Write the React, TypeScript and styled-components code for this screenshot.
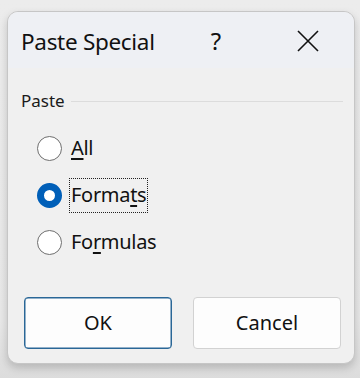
import React, { useState } from "react"
import styled, { createGlobalStyle } from "styled-components"

const GlobalStyle = createGlobalStyle`
  html, body {
    margin: 0;
    padding: 0;
    background: #ebebeb;
    font-family: "Noto Sans", "Open Sans", sans-serif;
    color: #1a1a1a;
  }
`

const Stage = styled.div`
  width: 360px;
  height: 378px;
  padding: 11px 5px 0 7px;
  box-sizing: border-box;
  background: linear-gradient(#ececec 0%, #e8e8e8 85%, #dcdcdc 100%);
`

const Dialog = styled.div`
  width: 348px;
  height: 353px;
  box-sizing: border-box;
  border: 1px solid #c6c6c6;
  border-radius: 11px;
  background: #f0f0f0;
  box-shadow: 0 4px 8px rgba(0, 0, 0, 0.18);
  overflow: hidden;
  display: flex;
  flex-direction: column;
`

const TitleBar = styled.div`
  height: 56px;
  background: #eef0f4;
  display: flex;
  align-items: center;
  padding: 0 24px 0 13px;
`

const Title = styled.div`
  font-size: 22.5px;
  letter-spacing: -0.3px;
  color: #111;
  width: 188px;
  flex-shrink: 0;
  padding-top: 2px;
`

const TitleButton = styled.div<{ $w: number; $push?: boolean }>`
  width: ${(p) => p.$w}px;
  flex-shrink: 0;
  margin-left: ${(p) => (p.$push ? "auto" : "0")};
  display: flex;
  justify-content: center;
  align-items: center;
  font-size: 24px;
  color: #111;
  padding-top: 1px;
`

const Body = styled.div`
  flex: 1;
  display: flex;
  flex-direction: column;
  padding: 20px 11px 0 13px;
`

const GroupHeader = styled.div`
  display: flex;
  align-items: center;
  gap: 6px;
  font-size: 17px;
  color: #1a1a1a;
  height: 24px;
`

const GroupLine = styled.div`
  flex: 1;
  height: 1px;
  background: #dcdcdc;
  margin-top: 2px;
`

const RadioList = styled.div`
  display: flex;
  flex-direction: column;
  gap: 20px;
  padding: 23px 0 0 16px;
`

const RadioRow = styled.label`
  display: flex;
  align-items: center;
  gap: 8px;
  height: 27px;
  font-size: 20px;
  color: #111;
  cursor: default;
`

const RadioCircle = styled.span<{ $checked: boolean }>`
  width: 25px;
  height: 25px;
  box-sizing: border-box;
  border-radius: 50%;
  flex-shrink: 0;
  border: ${(p) => (p.$checked ? "7.5px solid #005fb8" : "1.5px solid #6e6e6e")};
  background: #fff;
`

const RadioText = styled.span<{ $focus: boolean }>`
  padding: 2px 1px 4px 1px;
  outline: ${(p) => (p.$focus ? "1px dotted #222" : "none")};
  outline-offset: 0;
  letter-spacing: -0.3px;
`

const Accel = styled.span`
  text-decoration: underline;
  text-underline-offset: 3px;
  text-decoration-thickness: 1.5px;
`

const ButtonRow = styled.div`
  margin-top: auto;
  display: flex;
  gap: 21px;
  padding: 0 0 14px 3px;
`

const DialogButton = styled.button<{ $primary?: boolean }>`
  width: 148px;
  height: 52px;
  box-sizing: border-box;
  border-radius: 4px;
  background: #fdfdfd;
  border: 1px solid ${(p) => (p.$primary ? "#2a6797" : "#d2d2d2")};
  box-shadow: ${(p) => (p.$primary ? "inset 0 0 0 0.5px #2a6797" : "none")};
  font-family: "Noto Sans", "Open Sans", sans-serif;
  font-size: 20px;
  color: #111;
  padding: 0 0 2px;
`

const options = [
  { key: "all", pre: "", acc: "A", post: "ll" },
  { key: "formats", pre: "Forma", acc: "t", post: "s" },
  { key: "formulas", pre: "Fo", acc: "r", post: "mulas" },
]

export default function App() {
  const [selected, setSelected] = useState("formats")

  return (
    <>
      <GlobalStyle />
      <Stage>
        <Dialog>
          <TitleBar>
            <Title>Paste Special</Title>
            <TitleButton $w={14}>?</TitleButton>
            <TitleButton $w={44} $push>
              <svg width="22" height="22" viewBox="0 0 22 22" aria-hidden="true">
                <path d="M1 1L21 21M21 1L1 21" stroke="#111" strokeWidth="1.6" fill="none" />
              </svg>
            </TitleButton>
          </TitleBar>
          <Body>
            <GroupHeader>
              <span>Paste</span>
              <GroupLine />
            </GroupHeader>
            <RadioList>
              {options.map((o) => (
                <RadioRow key={o.key} onClick={() => setSelected(o.key)}>
                  <RadioCircle $checked={selected === o.key} />
                  <RadioText $focus={selected === o.key}>
                    {o.pre}
                    <Accel>{o.acc}</Accel>
                    {o.post}
                  </RadioText>
                </RadioRow>
              ))}
            </RadioList>
            <ButtonRow>
              <DialogButton $primary>OK</DialogButton>
              <DialogButton>Cancel</DialogButton>
            </ButtonRow>
          </Body>
        </Dialog>
      </Stage>
    </>
  )
}
